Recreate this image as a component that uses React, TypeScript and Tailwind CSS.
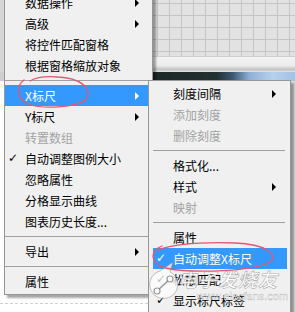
import React from 'react';

type Entry =
  | { sep: true }
  | { sep?: false; label: string; sub?: boolean; disabled?: boolean; checked?: boolean; active?: boolean };

const mainMenu: Entry[] = [
  { label: '数据操作', sub: true },
  { label: '高级', sub: true },
  { label: '将控件匹配窗格' },
  { label: '根据窗格缩放对象' },
  { sep: true },
  { label: 'X标尺', sub: true, active: true },
  { label: 'Y标尺', sub: true },
  { label: '转置数组', disabled: true },
  { label: '自动调整图例大小', checked: true },
  { label: '忽略属性' },
  { label: '分格显示曲线' },
  { label: '图表历史长度...' },
  { sep: true },
  { label: '导出', sub: true },
  { sep: true },
  { label: '属性' },
];

const xScaleMenu: Entry[] = [
  { label: '刻度间隔', sub: true },
  { label: '添加刻度', disabled: true },
  { label: '删除刻度', disabled: true },
  { sep: true },
  { label: '格式化...' },
  { label: '样式', sub: true },
  { label: '映射', disabled: true },
  { sep: true },
  { label: '属性' },
  { label: '自动调整X标尺', checked: true, active: true },
  { label: '松散匹配', checked: true },
  { label: '显示标尺标签', checked: true },
];

const font = { fontFamily: '"Noto Sans CJK SC", "DejaVu Sans", sans-serif' };

function Arrow({ active }: { active?: boolean }) {
  return (
    <span
      className={
        'ml-auto h-0 w-0 border-y-[4px] border-l-[4px] border-y-transparent ' +
        (active ? 'border-l-white' : 'border-l-black')
      }
    />
  );
}

function Row({ entry, arrowGap }: { entry: Entry; arrowGap: string }) {
  if (entry.sep) return null;
  const color = entry.active ? 'bg-[#3399ff] text-white' : entry.disabled ? 'text-[#a3a3a3]' : 'text-black';
  return (
    <div className={'relative flex h-[21px] items-center ' + color}>
      {entry.checked && (
        <span className="absolute left-[3px] top-0 text-[12px] leading-[21px]" style={{ fontFamily: '"DejaVu Sans", sans-serif' }}>
          ✓
        </span>
      )}
      <span className="pl-[20px] text-[12px] leading-[21px]">{entry.label}</span>
      {entry.sub && (
        <span className={'ml-auto flex ' + arrowGap}>
          <Arrow active={entry.active} />
        </span>
      )}
    </div>
  );
}

function Watermark() {
  return (
    <div className="pointer-events-none absolute left-[146px] top-[258px] h-[48px] w-[146px]">
      <svg width="40" height="48" viewBox="0 0 40 48" className="absolute left-0 top-0">
        <path d="M 27 4 L 24 14 A 14 14 0 1 1 14 13 Z" fill="rgba(255,255,255,0.75)" stroke="rgba(120,120,120,0.45)" strokeWidth="1" />
        <line x1="11" y1="33" x2="24" y2="21" stroke="rgba(110,110,110,0.7)" strokeWidth="1.5" />
        <circle cx="11" cy="33" r="3" fill="white" stroke="rgba(110,110,110,0.7)" strokeWidth="1.2" />
        <circle cx="24" cy="21" r="3" fill="white" stroke="rgba(110,110,110,0.7)" strokeWidth="1.2" />
      </svg>
      <div
        className="absolute left-[32px] top-[10px] text-[19px] font-bold italic leading-[22px] tracking-[1px] text-white/80"
        style={{ ...font, WebkitTextStroke: '0.6px rgba(110,110,110,0.55)' }}
      >
        电子发烧友
      </div>
      <div
        className="absolute left-[51px] top-[31px] text-[11px] leading-[14px] text-white/85"
        style={{ fontFamily: '"Liberation Sans", sans-serif', WebkitTextStroke: '0.4px rgba(120,120,120,0.5)' }}
      >
        www.elecfans.com
      </div>
    </div>
  );
}

export default function App() {
  return (
    <div className="relative h-[312px] w-[295px] overflow-hidden bg-white" style={font}>
      {/* window behind the menus */}
      <div className="flex h-[56px]">
        <div className="w-[153px] bg-[#d6d6d6]" />
        <div className="flex-1 bg-[#e2e2e2] bg-[linear-gradient(to_right,#c4c4c4_1px,transparent_1px),linear-gradient(to_bottom,#c4c4c4_1px,transparent_1px)] bg-[size:12px_12px] bg-[position:4px_3px]" />
      </div>
      <div className="flex h-[16px]">
        <div className="w-[153px] bg-[#d6d6d6]" />
        <div className="flex-1 bg-[linear-gradient(to_bottom,#a8a8a8_0px,#f3f3f3_1px,#ececec_60%,#c2c2c2_85%,#e4e4e4_100%)]" />
      </div>
      <div className="flex h-[9px]">
        <div className="w-[153px] bg-[#cfcfcf]" />
        <div className="flex-1 bg-[linear-gradient(to_right,#1b2727_0%,#223131_45%,#3c5870_56%,#8eb0d6_68%,#b6d0ee_84%,#a5c2e4_100%)]" />
      </div>
      <div className="flex h-[231px]">
        <div className="flex w-[153px] flex-col bg-white">
          <div className="mt-[222px] border-t border-dashed border-[#cfcfcf]" />
        </div>
        <div className="flex-1 bg-[#dedede]" />
      </div>

      {/* context menu */}
      <div className="absolute left-[4px] top-[-11px] w-[149px] border border-[#979797] bg-[#f0f0f0] py-[2px] shadow-[3px_3px_2px_rgba(0,0,0,0.35)]">
        {mainMenu.map((e, i) =>
          e.sep ? (
            <div key={i} className="flex h-[9px] items-center pr-[4px]">
              <div className="h-px flex-1 bg-[#a0a0a0]" />
            </div>
          ) : (
            <Row key={i} entry={e} arrowGap="mr-[13px]" />
          )
        )}
      </div>

      {/* X scale submenu */}
      <div className="absolute left-[148px] top-[80px] w-[143px] border border-[#979797] bg-[#f0f0f0] py-[2px] shadow-[3px_3px_2px_rgba(0,0,0,0.35)]">
        {xScaleMenu.map((e, i) =>
          e.sep ? (
            <div key={i} className="flex h-[9px] items-center pl-[4px] pr-[5px]">
              <div className="h-px flex-1 bg-[#a0a0a0]" />
            </div>
          ) : (
            <div key={i} className="ml-[4px] mr-[3px]">
              <Row entry={e} arrowGap="mr-[11px]" />
            </div>
          )
        )}
      </div>

      <Watermark />

      {/* hand-drawn marks */}
      <svg className="pointer-events-none absolute left-0 top-0" width="295" height="312" viewBox="0 0 295 312">
        <path
          d="M 24 80 C 17 85, 15 98, 28 104 C 45 110, 80 107, 87 98 C 92 88, 80 78, 58 77 C 45 76, 35 78, 30 81"
          fill="none"
          stroke="#e4576e"
          strokeWidth="1.3"
          strokeLinecap="round"
        />
        <path
          d="M 162 246 C 151 250, 148 262, 165 268 C 195 274, 255 271, 270 262 C 279 255, 266 244, 235 243 C 205 242, 178 243, 158 250"
          fill="none"
          stroke="#e4576e"
          strokeWidth="1.3"
          strokeLinecap="round"
        />
      </svg>
    </div>
  );
}
